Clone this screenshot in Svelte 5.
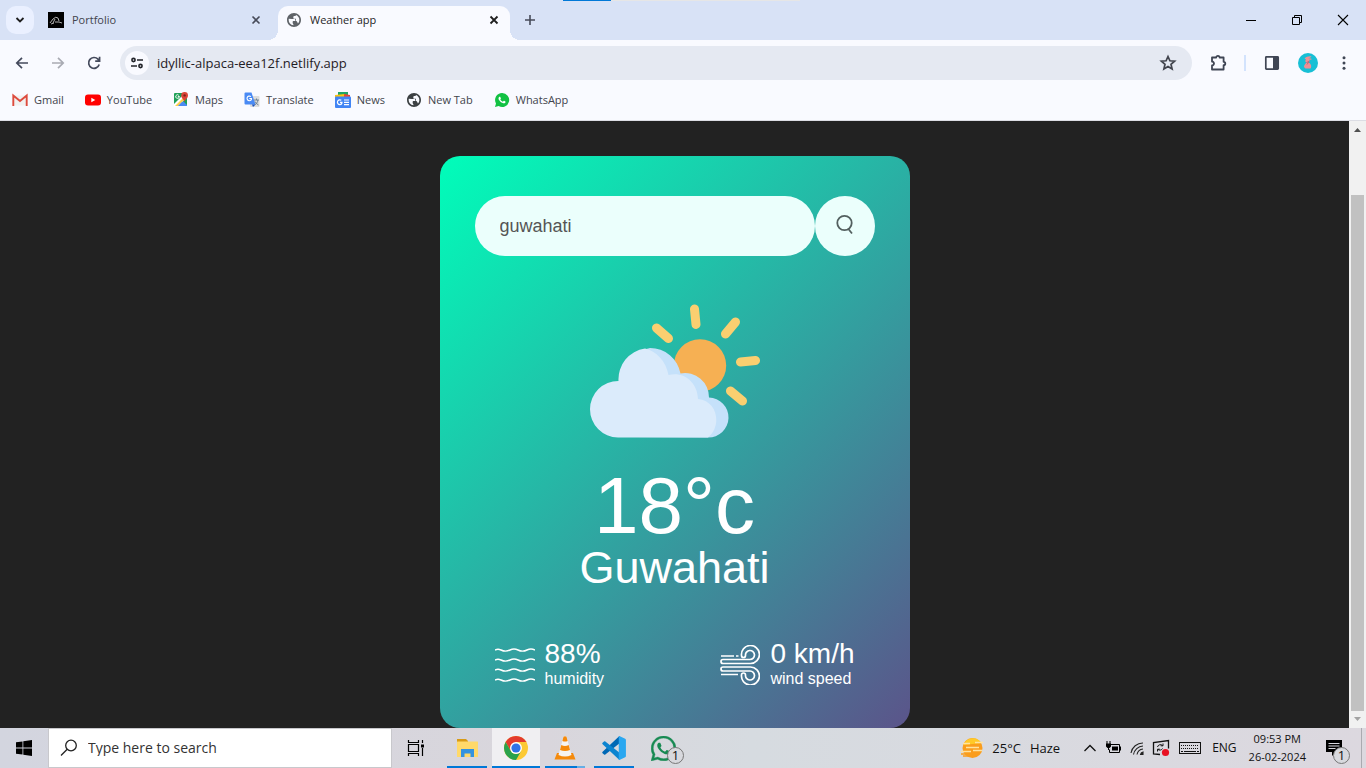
<script>
  const globe = 'M12 1.500C6.200 1.500 1.500 6.200 1.500 12S6.200 22.500 12 22.500 22.500 17.800 22.500 12 17.800 1.500 12 1.500zM11 19.930c-3.950-.490-7-3.850-7-7.930 0-.620.080-1.210.210-1.790L9 10.500h3.500c1 0 1.500.800 1.500 1.500v1.500h-3c-.6 0-1 .4-1 1V16c0 1.100 1 2 1 2zM17.900 17.390l-1-2.400c-.3-.7-1-1.390-1.900-1.390V10h-3c-.6 0-1-.45-1-1V7.500c0-1.100.9-1.500 2-1.500s2-.5 2-1.410c2.930 1.190 5 4.060 5 7.410 0 2.080-.8 3.970-2.100 5.390z';
  const phone = 'M17.472 14.382c-.297-.149-1.758-.867-2.030-.967-.273-.099-.471-.148-.67.15-.197.297-.767.966-.94 1.164-.173.199-.347.223-.644.075-.297-.15-1.255-.463-2.39-1.475-.883-.788-1.48-1.761-1.653-2.059-.173-.297-.018-.458.13-.606.134-.133.298-.347.446-.52.149-.174.198-.298.298-.497.099-.198.05-.371-.025-.52-.075-.149-.669-1.612-.916-2.207-.242-.579-.487-.5-.669-.51-.173-.008-.371-.01-.57-.01-.198 0-.52.074-.792.372-.272.297-1.04 1.016-1.04 2.479 0 1.462 1.065 2.875 1.213 3.074.149.198 2.096 3.2 5.077 4.487.709.306 1.262.489 1.694.625.712.227 1.36.195 1.871.118.571-.085 1.758-.719 2.006-1.413.248-.694.248-1.289.173-1.413-.074-.124-.272-.198-.57-.347';
  const bubble = 'M12.051 21.785h-.004a9.87 9.87 0 01-5.031-1.378l-.361-.214-3.741.982.998-3.648-.235-.374a9.86 9.86 0 01-1.51-5.26c.001-5.45 4.436-9.884 9.888-9.884 2.64 0 5.122 1.03 6.988 2.898a9.825 9.825 0 012.893 6.994c-.003 5.45-4.437 9.884-9.885 9.884m8.413-18.297A11.815 11.815 0 0012.05 0C5.495 0 .16 5.335.157 11.892c0 2.096.547 4.142 1.588 5.945L.057 24l6.305-1.654a11.882 11.882 0 005.683 1.448h.005c6.554 0 11.89-5.335 11.893-11.893a11.821 11.821 0 00-3.48-8.413z';

  const bookmarks = ['Gmail', 'YouTube', 'Maps', 'Translate', 'News', 'New Tab', 'WhatsApp'];
  const apps = ['Explorer', 'Chrome', 'VLC', 'Code', 'WhatsApp'];
  let city = $state('guwahati');
</script>

{#snippet bookmarkIcon(name)}
  <svg width="16" height="16" viewBox="0 0 16 16" aria-hidden="true">
    {#if name === 'Gmail'}
      <path d="M1 3.500h14v10H1z" fill="#f1f1f1" />
      <path d="M1.300 14V3.500L8 9l6.700-5.500V14" fill="none" stroke="#dd4b3e" stroke-width="1.900" />
    {:else if name === 'YouTube'}
      <rect y="2.500" width="16" height="11" rx="3" fill="#f00" />
      <path d="M6.300 5.700v4.600l4-2.300z" fill="#fff" />
    {:else if name === 'Maps'}
      <rect x="1" y="1" width="13" height="13" rx="1" fill="#1f9f57" />
      <path d="M1 14 8 7l6 6v1z" fill="#4a89f3" />
      <path d="m1 12 9-9 3 3-9 9H1z" fill="#fff" />
      <path d="m2 14 8-8 1.500 1.500L5 14z" fill="#ffd04b" />
      <path d="m5 14 4-4 4 4z" fill="#4a89f3" />
      <path d="M6.500 4.500H4.800m1.500 0a1.800 1.800 0 1 1-.5-1.200" fill="none" stroke="#fff" stroke-width=".9" />
      <path d="M11.500 10C11.300 7.500 8.200 6.600 8.200 3.500a3.400 3.400 0 0 1 6.800 0c0 3.100-3.300 4-3.500 6.500z" fill="#dc4437" />
      <circle cx="11.600" cy="3.400" r="1.200" fill="#7b231c" />
    {:else if name === 'Translate'}
      <rect x="6" y="4" width="9.500" height="11" rx="1" fill="#dcdcdc" />
      <path d="M10 8h5M12.500 6.500V8M10.500 13c2-1 3.300-3 3.300-5M11 9.500c.7 1.500 2 2.700 3.500 3.500" fill="none" stroke="#667b8b" stroke-width=".9" />
      <path d="M1.500.5H7.500l4 12H1.500A1 1 0 0 1 .5 11.500v-10a1 1 0 0 1 1-1z" fill="#4a8af4" />
      <path d="m8 12.500 3.500 0L9 15z" fill="#1b52bd" />
      <path d="M5.300 6.500h2.200c0 1.400-.9 2.200-2.200 2.200a2.300 2.300 0 1 1 1.600-4" fill="none" stroke="#fff" stroke-width="1.100" />
    {:else if name === 'News'}
      <rect x="3" width="10" height="5" fill="#20a565" />
      <path d="m0 3 10-1v4H0z" fill="#ffc20f" /><path d="m9 2 6 1v3H9z" fill="#ea4335" />
      <rect y="4.500" width="16" height="11.500" rx="1" fill="#4285f4" />
      <path d="M5 10.300h2c0 1.400-.8 2.300-2.200 2.300a2.400 2.400 0 1 1 1.500-4.300M9 8h5M9 10.300h5M9 12.600h5" fill="none" stroke="#fff" stroke-width="1.200" />
    {:else if name === 'New Tab'}
      <g transform="scale(.6667)"><path d={globe} fill="#3c4043" /></g>
    {:else}
      <g transform="translate(1 1) scale(.5833)"><path d="M12 0A12 12 0 0 0 1.700 18L0 24l6.300-1.600A12 12 0 1 0 12 0" fill="#12c143" /><path d={phone} fill="#fff" /></g>
    {/if}
  </svg>
{/snippet}

{#snippet appIcon(name)}
  {#if name === 'Explorer'}
    <svg width="24" height="24" viewBox="0 0 24 24" aria-hidden="true">
      <path d="M2 3h9l2 2v4H2z" fill="#d89b16" /><rect x="2" y="5.500" width="21" height="15.500" rx=".5" fill="#ffd96a" />
      <path d="M6 21v-8h13v8h-3.500v-3.500h-6V21z" fill="#3493e0" />
    </svg>
  {:else if name === 'Chrome'}
    <svg width="24" height="24" viewBox="0 0 24 24" aria-hidden="true">
      <circle cx="12" cy="12" r="12" fill="#fcc934" />
      <path d="M1.610 6A12 12 0 0 1 22.390 6H12L6.800 15z" fill="#e33b2e" />
      <path d="M1.610 6A12 12 0 0 0 12 24l5.200-9A6 6 0 0 1 6.800 15z" fill="#2aa24c" />
      <circle cx="12" cy="12" r="6" fill="#fff" /><circle cx="12" cy="12" r="4.600" fill="#2f72e8" />
    </svg>
  {:else if name === 'VLC'}
    <svg width="24" height="24" viewBox="0 0 24 24" aria-hidden="true">
      <path d="M4 17h16l2.500 6.500h-21z" fill="#f58a0b" />
      <path d="M10.500.8q1.500-1.200 3 0L18.500 19q-6.500 3-13 0z" fill="#f6f4f1" />
      <path d="M10.500.8q1.500-1.200 3 0L14.600 5q-2.600 1-5.200 0zM8.300 9q3.700 1.800 7.400 0l1.300 5q-5 2.200-10 0z" fill="#f58a0b" />
    </svg>
  {:else if name === 'Code'}
    <svg width="26" height="26" viewBox="0 0 24 24" aria-hidden="true">
      <path d="M17 1 1.500 15.500c-.5.500-.5 1 0 1.400l1.300 1.200c.4.300.8.300 1.200 0L18 7z" fill="#0068b5" />
      <path d="m17 23-15.500-14.500c-.5-.500-.5-1 0-1.400l1.300-1.200c.4-.300.8-.300 1.200 0L18 17z" fill="#0c84d0" />
      <path d="M17 1l5.300 2.500c.5.200.7.600.7 1v15c0 .400-.2.800-.7 1L17 23c-.5.200-.6-.2-.6-.5v-21c0-.4.200-.7.600-.5z" fill="#2aa7f0" />
    </svg>
  {:else}
    <svg width="25" height="25" viewBox="0 0 24 24" aria-hidden="true"><path d={bubble} fill="#178a52" stroke="#178a52" stroke-width=".4" /><path d={phone} fill="#178a52" /></svg>
  {/if}
{/snippet}

<div class="screen">
  <div class="load-strip" aria-hidden="true"></div>
  <header class="tabs">
    <button class="tab-search" aria-label="Search tabs"><svg width="12" height="12" viewBox="0 0 12 12"><path d="m2.500 4 3.500 3.500L9.500 4" fill="none" stroke="#1f1f1f" stroke-width="1.800" /></svg></button>
    <div class="tab">
      <svg width="16" height="16" viewBox="0 0 16 16" aria-hidden="true"><rect width="16" height="16" /><path d="M2 11 5 7q3-3 5-1l1 3M5 11l2-4M7 10h4l3 1M3 12l3-1" fill="none" stroke="#ddd" stroke-width=".8" /></svg>
      <span>Portfolio</span>
      <button class="close" aria-label="Close Portfolio"><svg width="10" height="10" viewBox="0 0 10 10"><path d="m1.500 1.500 7 7m0-7-7 7" stroke="#474b59" stroke-width="1.600" /></svg></button>
    </div>
    <div class="tab active">
      <svg width="16" height="16" viewBox="0 0 24 24" aria-hidden="true"><path d={globe} fill="#5f6368" /></svg>
      <span>Weather app</span>
      <button class="close" aria-label="Close Weather app"><svg width="10" height="10" viewBox="0 0 10 10"><path d="m1.500 1.500 7 7m0-7-7 7" stroke="#1f1f1f" stroke-width="1.800" /></svg></button>
    </div>
    <button class="new-tab" aria-label="New tab"><svg width="12" height="12" viewBox="0 0 12 12"><path d="M6 1v10M1 6h10" stroke="#474b59" stroke-width="1.600" /></svg></button>
    <div class="window-controls">
      <button aria-label="Minimize"><svg width="12" height="12" viewBox="0 0 12 12"><path d="M1 6.500h10" stroke="#000" /></svg></button>
      <button aria-label="Restore"><svg width="12" height="12" viewBox="0 0 12 12"><path d="M1.500 3.500h7v7h-7zM3.500 3.500v-2h7v7h-2" fill="none" stroke="#000" /></svg></button>
      <button aria-label="Close"><svg width="12" height="12" viewBox="0 0 12 12"><path d="m1 1 10 10m0-10L1 11" stroke="#000" stroke-width="1.100" /></svg></button>
    </div>
  </header>

  <div class="toolbar">
    <button aria-label="Back"><svg width="16" height="16" viewBox="0 0 16 16"><path d="M14 8H3m5-5.200L2.800 8 8 13.200" fill="none" stroke="#444a5c" stroke-width="1.700" /></svg></button>
    <button aria-label="Forward"><svg width="16" height="16" viewBox="0 0 16 16"><path d="M2 8h11M8 2.800 13.200 8 8 13.200" fill="none" stroke="#a9abb3" stroke-width="1.700" /></svg></button>
    <button aria-label="Reload"><svg width="16" height="16" viewBox="0 0 16 16"><path d="M13.200 9.500A5.400 5.400 0 1 1 12 4.200L13.400 6M13.600 1.800v4.400H9.200" fill="none" stroke="#444a5c" stroke-width="1.700" /></svg></button>
    <div class="omnibox">
      <button class="site-info" aria-label="Site information"><svg width="14" height="14" viewBox="0 0 14 14"><g fill="none" stroke="#22242a" stroke-width="1.600"><circle cx="3.500" cy="4" r="1.600" /><path d="M7 4h6M1 10h6" /><circle cx="10.500" cy="10" r="1.600" /></g></svg></button>
      <input aria-label="Address" value="idyllic-alpaca-eea12f.netlify.app" />
      <button class="star" aria-label="Bookmark"><svg width="18" height="18" viewBox="0 0 18 18"><path d="m9 2.500 1.900 4.300 4.700.4-3.600 3.100 1.100 4.700L9 12.500 4.900 15 6 10.300 2.400 7.200l4.700-.4z" fill="none" stroke="#41444d" stroke-width="1.700" /></svg></button>
    </div>
    <button aria-label="Extensions"><svg width="18" height="18" viewBox="0 0 18 18"><path d="M3 3.500h4.200a1.700 1.700 0 0 1 3.400 0h4v4.300a1.700 1.700 0 0 1 0 3.400v4.300H3v-4a2 2 0 0 0 0-4z" fill="none" stroke="#3f4554" stroke-width="1.800" stroke-linejoin="round" /></svg></button>
    <span class="divider"></span>
    <button aria-label="Side panel"><svg width="16" height="16" viewBox="0 0 16 16"><rect x="1.800" y="1.800" width="12.400" height="12.400" rx=".6" fill="none" stroke="#3f4554" stroke-width="1.700" /><path d="M9 2h5v12H9z" fill="#3f4554" /></svg></button>
    <button aria-label="Profile"><svg width="20" height="20" viewBox="0 0 20 20"><circle cx="10" cy="10" r="10" fill="#18bfd5" /><path d="M6.500 5.500C8 4 11 3 13.500 3.500c-1 1-2 1.500-3.500 1.800 1.500-.3 3 0 4 .7-1 .8-2 .8-3 .8 1 1 .6 2-.3 2.700 2.300 1.300 3.300 4 1.800 6H7.500c-1-.5-1.500-1.500-1.500-2.500 1-2 2-2.500 2.500-3.700C7 9 7 7.500 8 6.500z" fill="#f08f95" /><path d="m8.500 9.500 2.500-1-2 3" fill="none" stroke="#a65b6d" stroke-width=".7" /></svg></button>
    <button aria-label="Menu"><svg width="16" height="16" viewBox="0 0 16 16" fill="#3f4554"><circle cx="8" cy="2.700" r="1.500" /><circle cx="8" cy="8" r="1.500" /><circle cx="8" cy="13.300" r="1.500" /></svg></button>
  </div>

  <nav class="bookmarks" aria-label="Bookmarks">
    {#each bookmarks as name}
      <a href="#{name}">{@render bookmarkIcon(name)}<span>{name}</span></a>
    {/each}
  </nav>

  <div class="viewport">
    <main>
      <section class="card">
        <form class="search" onsubmit={(e) => e.preventDefault()}>
          <input aria-label="City" bind:value={city} spellcheck="false" />
          <button aria-label="Search"><svg width="20" height="24" viewBox="0 0 20 24"><circle cx="9.500" cy="9" r="7.200" fill="none" stroke="#53605f" stroke-width="1.800" /><path d="m13 14.500 4 5" stroke="#53605f" stroke-width="1.800" /></svg></button>
        </form>
        <svg class="weather" viewBox="0 0 170 170" role="img" aria-label="Partly cloudy">
          <g stroke="#facf70" stroke-width="9" stroke-linecap="round">
            <path d="m104.500 23 1.500 15.500M145.500 36l-10 12M66.500 42l12 10.500M150.500 76l15-1.500M140.500 105l12 10" />
          </g>
          <circle cx="110" cy="79.500" r="26.200" fill="#f6b053" />
          <path d="M45 151V75q5-12 15-13a31 31 0 0 1 30.500 25.500A24 24 0 0 1 119 111.500a20 20 0 0 1-1 40z" fill="#c5e1fa" />
          <path d="M28 151.500a28.200 28.200 0 0 1 .5-56.500A31 31 0 0 1 55 62.500C66 65 76 75 78.500 89c15-4 29 7 29.500 24 20 2 24 27 10 38.500z" fill="#dbebfb" />
        </svg>
        <h1>18°c</h1>
        <h2>Guwahati</h2>
        <div class="details">
          <div class="detail">
            <svg width="40" height="40" viewBox="0 0 40 40" fill="none" stroke="#fff" stroke-width="1.400" aria-hidden="true">
              {#each [5, 15, 25, 35] as y}
                <path d="M0 {y}q3-1.500 6 0c4 2 6 1.500 9 0q4-2 8 0c4 2 6 1.500 9 0q4-2 8 0" />
              {/each}
            </svg>
            <div><p class="value">88%</p><p>humidity</p></div>
          </div>
          <div class="detail">
            <svg width="40" height="40" viewBox="0 0 40 40" fill="none" stroke="#fff" stroke-width="1.700" aria-hidden="true">
              <path d="M1 11h13M16 11h2.500M1 29.500h17" />
              <path d="M3 14.500h27a4.500 4.500 0 1 0-4.500-4 2 2 0 0 1-4 0A9 9 0 1 1 30.500 18.500H3a2 2 0 0 1 0-4zM3 26h27a4.500 4.500 0 1 1-4.500 4 2 2 0 0 0-4 0A9 9 0 1 0 30.500 22H3a2 2 0 0 0 0 4z" />
            </svg>
            <div><p class="value">0 km/h</p><p>wind speed</p></div>
          </div>
        </div>
      </section>
    </main>
    <div class="scrollbar" aria-hidden="true">
      <svg width="7" height="6" viewBox="0 0 7 6"><path d="M0 5 3.500 1 7 5z" fill="#505050" /></svg>
      <div class="track"><div class="thumb"></div></div>
      <svg width="7" height="6" viewBox="0 0 7 6"><path d="m0 1 3.500 4L7 1z" fill="#a3a3a3" /></svg>
    </div>
  </div>

  <footer class="taskbar">
    <button class="start" aria-label="Start"><svg width="16" height="16" viewBox="0 0 16 16"><path d="m0 2.300 6.500-.9v6.200H0zM7.300 1.300 16 0v7.600H7.300zM0 8.400h6.500v6.200L0 13.700zM7.300 8.400H16V16l-8.700-1.300z" /></svg></button>
    <label class="task-search">
      <svg width="18" height="18" viewBox="0 0 18 18" aria-hidden="true"><circle cx="11" cy="6.500" r="5.300" fill="none" stroke="#222" stroke-width="1.300" /><path d="M7.200 10.300 1 16.500" stroke="#222" stroke-width="1.300" /></svg>
      <input aria-label="Windows search" placeholder="Type here to search" />
    </label>
    <button class="task-view" aria-label="Task view"><svg width="18" height="16" viewBox="0 0 18 16"><path d="M1.500 0v2.500h10V0M1.500 16v-2.500h10V16M1.500 4.500h10v7h-10zM15.500 0v3M15.500 8v8" fill="none" stroke="#000" stroke-width="1.200" /><path d="M14 4.500h3v3h-3z" /></svg></button>
    <div class="apps">
      {#each apps as name}
        <button class={['app', name.toLowerCase()]} aria-label={name}>
          {@render appIcon(name)}
          {#if name === 'WhatsApp'}<span class="badge">1</span>{/if}
        </button>
      {/each}
    </div>
    <div class="tray">
      <button class="forecast">
        <svg width="22" height="22" viewBox="0 0 22 22" aria-hidden="true"><circle cx="11.500" cy="11" r="10" fill="#fa9d1c" /><path d="M2.500 8a10 10 0 0 1 18-2z" fill="#ffc928" /><path d="M0 17h9M2 19h8" stroke="#fa9d1c" stroke-width="1.500" /><path d="M2 6.500h7M14 5.500h8M0 14.500h10M5 10.500h13M12 13.500h9" stroke="#ffe3a0" stroke-width="1.300" /></svg>
        <span>25°C</span><span>Haze</span>
      </button>
      <button class="chevron" aria-label="Show hidden icons"><svg width="14" height="8" viewBox="0 0 14 8"><path d="m1.500 7 5.500-5.500L12.500 7" fill="none" stroke="#111" stroke-width="1.300" /></svg></button>
      <svg width="17" height="14" viewBox="0 0 17 14" aria-label="Battery charging" role="img"><path d="M6 3.500h8.500v8H4.500v-3" fill="none" stroke="#000" /><path d="M7 5.500h6v4H7zM15 5.500h1v4h-1zM1 2.500h5v3l-1.500 1.500H4V9H3V7H2.500L1 5.500zM1.500 0h1v3h-1zM4.500 0h1v3h-1z" /></svg>
      <svg width="14" height="14" viewBox="0 0 14 14" aria-label="Wireless" role="img" fill="none" stroke="#222" stroke-width="1.100"><path d="M1 12A12 12 0 0 1 13 2M3.500 13.500A10 10 0 0 1 13 5M7 13.500A7 7 0 0 1 13 8" /><path d="M10.500 13.500a3 3 0 0 1 2.500-2.500v2.500z" fill="#222" /></svg>
      <svg width="18" height="18" viewBox="0 0 18 18" aria-label="Update available" role="img"><path d="M8 15.500 1.500 15V3.500l15-2v8" fill="none" stroke="#111" stroke-width="1.300" /><path d="M5.500 8a3 3 0 0 1 5-1.500M11 4.500v2.300H8.700M10.500 9.500a3 3 0 0 1-4.500 1M5.500 12.500v-2.300h2.300" fill="none" stroke="#111" /><circle cx="13.500" cy="13.500" r="3.600" fill="#e81123" /></svg>
      <svg width="24" height="14" viewBox="0 0 24 14" aria-label="Keyboard" role="img"><rect x="1.500" y="1.500" width="21" height="11" fill="none" stroke="#111" /><path d="M3 4.500h18M3 7.500h18" stroke="#111" stroke-dasharray="1 1" /><path d="M3 10.500h2M6 10.500h12M19 10.500h2" stroke="#111" /></svg>
      <span class="lang">ENG</span>
      <time datetime="2024-02-26T21:53"><span>09:53 PM</span><span>26-02-2024</span></time>
      <button class="notes" aria-label="Notifications"><svg width="18" height="18" viewBox="0 0 18 18"><path d="M1 1h16v12h-6l-4 4v-4H1z" /><path d="M3.500 4.500h11M3.500 7h11M3.500 9.500h7" stroke="#d8d8de" /></svg><span class="badge">1</span></button>
      <span class="peek"></span>
    </div>
  </footer>
</div>

<style>
  :global(body) { margin: 0; }
  * { box-sizing: border-box; }
  button, input { border: 0; padding: 0; background: none; font: inherit; color: inherit; outline: 0; }
  button { display: grid; place-items: center; }
  svg { flex: none; display: block; }
  .screen { position: relative; display: flex; flex-direction: column; height: 100vh; overflow: hidden; background: #f9faff; font: 12px/16px "Open Sans", "Noto Sans", sans-serif; color: #42444c; }
  .load-strip { position: absolute; top: 0; left: 563px; width: 237px; height: 1px; background: linear-gradient(90deg, #0078d7 48px, #e6e6e6 48px); }

  .tabs { display: flex; flex: none; height: 40px; padding-left: 6px; background: #d8e2f6; font-size: 11px; }
  .tab-search { width: 28px; height: 28px; margin-top: 6px; border-radius: 10px; background: #eaf0ff; }
  .tab { display: flex; align-items: center; gap: 8px; width: 244px; height: 34px; margin-top: 6px; padding: 0 16px 6px 14px; }
  .tab span { flex: 1; }
  .tab.active { position: relative; width: 232px; padding: 0 10px 6px 8px; border-radius: 10px 10px 0 0; background: #f9faff; color: #1f1f1f; }
  .tab.active::before, .tab.active::after { content: ""; position: absolute; bottom: 0; width: 10px; height: 10px; }
  .tab.active::before { right: 100%; background: radial-gradient(circle at 0 0, transparent 10px, #f9faff 10px); }
  .tab.active::after { left: 100%; background: radial-gradient(circle at 100% 0, transparent 10px, #f9faff 10px); }
  .close { width: 12px; height: 16px; }
  .new-tab { width: 28px; height: 28px; margin: 6px auto 0 6px; }
  .window-controls { display: flex; }
  .window-controls button { width: 46px; height: 40px; }

  .toolbar { display: flex; flex: none; align-items: center; height: 46px; padding: 0 4px; }
  .toolbar > button { width: 36px; height: 34px; }
  .omnibox { display: flex; flex: 1; align-items: center; height: 34px; margin: 0 8px; padding: 0 12px 0 5px; border-radius: 17px; background: #e5e9f2; }
  .site-info { width: 24px; height: 24px; border-radius: 50%; background: #f9faff; }
  .omnibox input { flex: 1; min-width: 0; margin-left: 8px; font-size: 13px; color: #1f2025; }
  .star { width: 24px; height: 24px; }
  .divider { width: 2px; height: 16px; margin: 0 8px; background: #d3e3fd; }

  .bookmarks { display: flex; flex: none; gap: 21px; height: 35px; padding: 0 12px 6px; align-items: center; border-bottom: 1px solid #dcdde4; font-size: 11px; }
  .bookmarks a { display: flex; align-items: center; gap: 6px; color: inherit; text-decoration: none; }

  .viewport { display: flex; flex: 1; min-height: 0; background: #222; font-family: "Liberation Sans", Arial, sans-serif; }
  main { flex: 1; min-width: 0; padding-top: 35px; overflow: hidden; }
  .card { width: 90%; max-width: 470px; margin: 0 auto; padding: 40px 35px; border-radius: 20px; background: linear-gradient(135deg, #00feba, #5b548a); color: #fff; text-align: center; }
  .search { display: flex; }
  .search input { flex: 1; min-width: 0; height: 60px; padding: 0 25px; border-radius: 30px; background: #ebfffc; color: #555; font-size: 18px; }
  .search button { width: 60px; height: 60px; border-radius: 50%; background: #ebfffc; }
  .weather { width: 170px; height: 170px; margin: 30px auto 0; }
  h1 { margin: 12px 0 0; font-size: 80px; line-height: 76px; font-weight: 500; }
  h2 { margin: 0; font-size: 45px; line-height: 48px; font-weight: 400; }
  .details { display: flex; justify-content: space-between; margin-top: 46px; padding: 0 20px; }
  .detail { display: flex; align-items: flex-end; gap: 10px; text-align: left; }
  .detail svg { margin-bottom: 3px; }
  p { margin: 0; font-size: 16px; line-height: 18px; }
  .value { font-size: 28px; line-height: 32px; }

  .scrollbar { display: flex; flex-direction: column; align-items: center; width: 17px; padding: 6px 0; background: #f1f1f1; }
  .track { display: flex; flex: 1; flex-direction: column; justify-content: flex-end; margin: 5px 0; }
  .thumb { width: 13px; height: 90%; background: #c1c1c1; }

  .taskbar { display: flex; flex: none; height: 40px; background: linear-gradient(90deg, #d3d5df, #d9d6dc 40%, #d6dbe0 55%, #dcd8df); color: #111; }
  .start { width: 48px; }
  .task-search { display: flex; align-items: center; gap: 10px; width: 344px; padding-left: 11px; border: 1px solid #c8c8cc; background: #fff; }
  .task-search input { flex: 1; min-width: 0; font-size: 14px; }
  .task-search input::placeholder { color: #333; opacity: 1; }
  .task-view { width: 48px; }
  .apps { display: flex; gap: 1px; margin-left: 3px; }
  .app { position: relative; width: 48px; }
  .app::after { content: ""; position: absolute; right: 4px; bottom: 0; left: 4px; height: 2px; background: #0078d7; }
  .app.chrome { background: #f0eff2; }
  .app.chrome::after { right: 0; left: 0; }
  .app.vlc::after { background: linear-gradient(90deg, #0078d7 80%, #65aee5 80%); }
  .app.whatsapp::after { display: none; }
  .badge { position: absolute; right: 3px; bottom: 4px; width: 17px; height: 17px; border: 1px solid #777; border-radius: 50%; background: #d8d9de; color: #111; font-size: 13px; line-height: 15px; text-align: center; }
  .tray { display: flex; align-items: center; gap: 8px; margin-left: auto; }
  .forecast { display: flex; align-items: center; gap: 9px; height: 40px; margin-right: 15px; font-size: 13px; }
  .lang { margin-left: 2px; }
  time { display: grid; gap: 2px; margin-left: 4px; font-size: 11px; text-align: center; }
  .notes { position: relative; width: 39px; height: 40px; }
  .peek { height: 40px; margin-right: 4px; border-left: 1px solid #aaaab0; }
</style>
